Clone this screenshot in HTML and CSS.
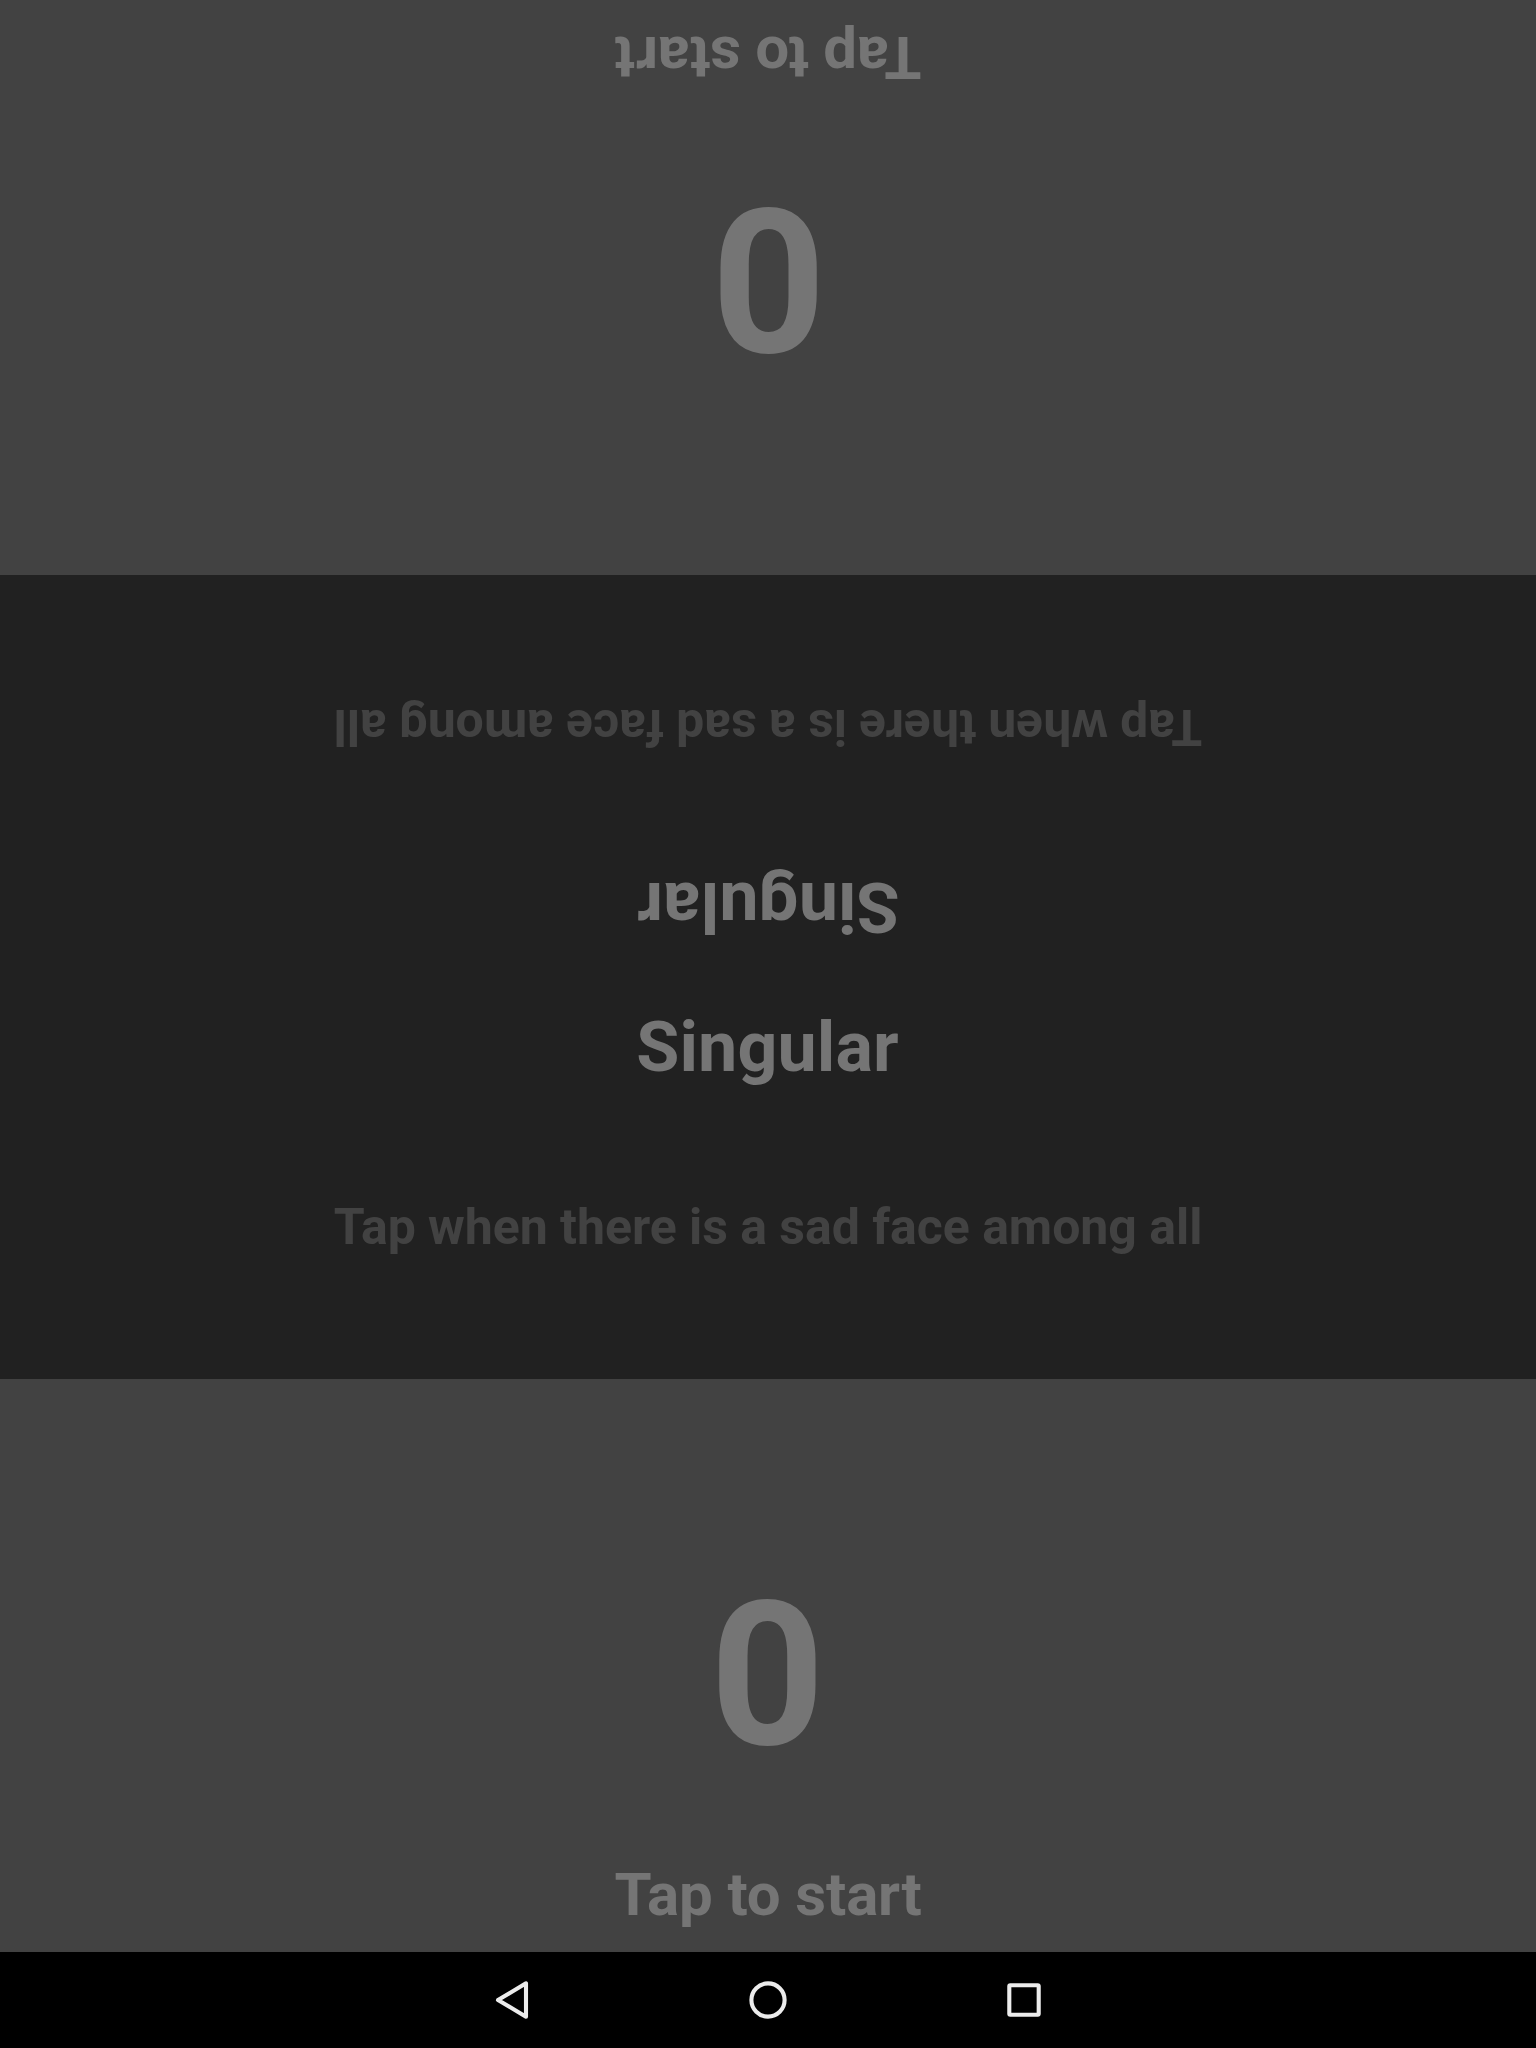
FILE: index.html
```html
<!DOCTYPE html>
<html lang="en">
<head>
<meta charset="utf-8">
<title>Singular</title>
<link rel="stylesheet" href="styles.css">
</head>
<body>
<main class="game">
  <section class="player player-top flipped">
    <div class="score">0</div>
    <div class="prompt">Tap to start</div>
  </section>
  <section class="board">
    <div class="instructions flipped">
      <h1 class="title">Singular</h1>
      <p class="rule">Tap when there is a sad face among all</p>
    </div>
    <div class="instructions">
      <h1 class="title">Singular</h1>
      <p class="rule">Tap when there is a sad face among all</p>
    </div>
  </section>
  <section class="player">
    <div class="score">0</div>
    <div class="prompt">Tap to start</div>
  </section>
</main>
<nav class="navbar">
  <svg class="icon" viewBox="0 0 48 48"><path d="M38 7.3V40.7L10 24Z"/></svg>
  <svg class="icon" viewBox="0 0 48 48"><circle cx="24" cy="24" r="16.6"/></svg>
  <svg class="icon" viewBox="0 0 48 48"><rect x="9.3" y="9.3" width="29.4" height="29.4" rx="1"/></svg>
</nav>
</body>
</html>
```
FILE: styles.css
```css
* { box-sizing: border-box; }

body {
  margin: 0;
  height: 2048px;
  display: flex;
  flex-direction: column;
  background: #000;
  font-family: Roboto, sans-serif;
  font-weight: 700;
  color: #757575;
  overflow: hidden;
}

.game {
  flex: 1;
  display: flex;
  flex-direction: column;
}

.player {
  height: 573px;
  padding-bottom: 22px;
  background: #424242;
  display: flex;
  flex-direction: column;
  align-items: center;
  justify-content: flex-end;
}

.player-top { height: 575px; }

/* The upper half faces the player on the other side of the device. */
.flipped { transform: rotate(180deg); }

.score {
  width: 116px;
  font-size: 200px;
  line-height: 235px;
}

.prompt {
  margin-top: 66px;
  font-size: 60px;
  line-height: 71px;
  letter-spacing: -0.14px;
}

.player-top .prompt { margin-top: 67px; }

.board {
  height: 804px;
  background: #212121;
}

.instructions {
  height: 402px;
  padding-top: 29px;
  display: flex;
  flex-direction: column;
  align-items: center;
}

.title {
  margin: 0;
  padding-right: 1px;
  font-size: 70px;
  line-height: 82px;
  letter-spacing: 0.1px;
}

.rule {
  margin: 110px 0 0;
  font-size: 50px;
  line-height: 58px;
  letter-spacing: -0.04px;
  color: #424242;
}

.navbar {
  height: 96px;
  display: flex;
  justify-content: center;
  align-items: center;
  gap: 208px;
}

.icon {
  width: 48px;
  height: 48px;
  fill: none;
  stroke: #ececec;
  stroke-width: 4.1;
  stroke-linejoin: round;
}
```
